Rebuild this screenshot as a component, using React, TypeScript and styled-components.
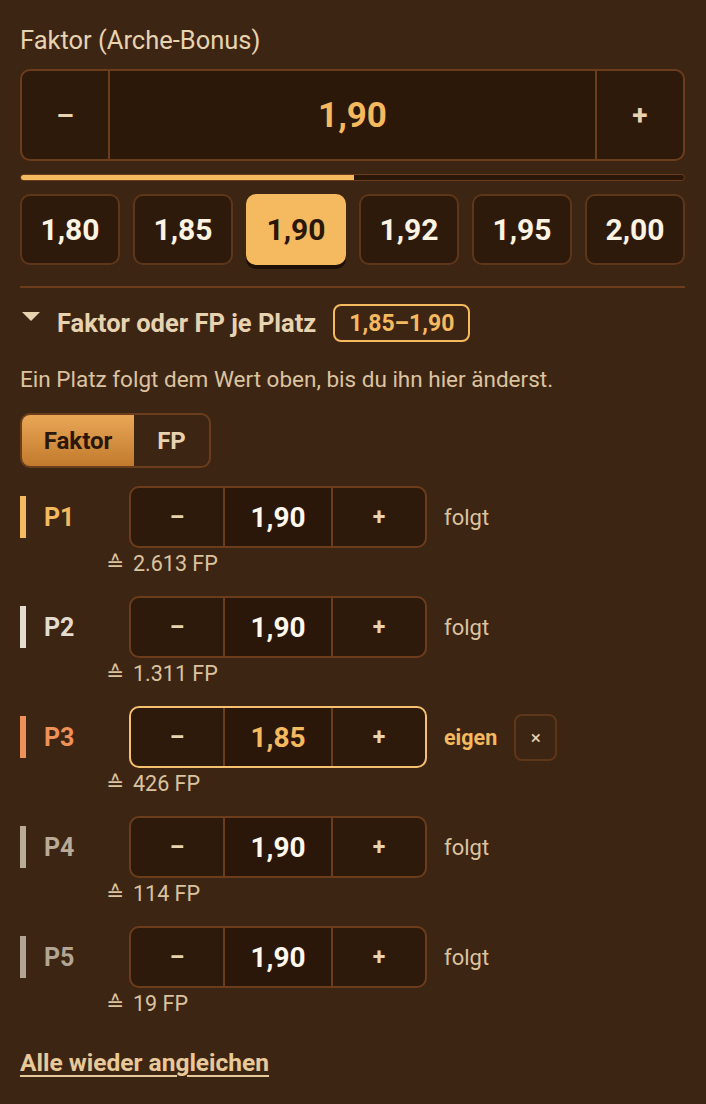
import React from 'react';
import styled, { createGlobalStyle, css } from 'styled-components';

const GlobalStyle = createGlobalStyle`
  body {
    margin: 0;
    background: #3d2513;
    font-family: Roboto, 'Noto Sans', 'DejaVu Sans', sans-serif;
    color: #e8d3b0;
  }
  * {
    box-sizing: border-box;
  }
`;

const Panel = styled.div`
  width: 706px;
  padding: 26px 21px 30px 20px;
`;

const Label = styled.div`
  font-size: 25.5px;
  line-height: 28px;
  color: #e8d3b0;
  margin-bottom: 15px;
`;

const BigStepper = styled.div`
  display: grid;
  grid-template-columns: 88px 1fr 88px;
  height: 92px;
  border: 2px solid #6b3d1c;
  border-radius: 10px;
  background: #2e1a0b;
  overflow: hidden;
`;

const StepButton = styled.button<{ $divider?: 'left' | 'right' }>`
  display: flex;
  align-items: center;
  justify-content: center;
  background: transparent;
  border: none;
  padding: 0;
  font-family: inherit;
  font-weight: 700;
  font-size: 28px;
  color: #e8d3b0;
  ${(p) =>
    p.$divider === 'left' &&
    css`
      border-left: 2px solid #6b3d1c;
    `}
  ${(p) =>
    p.$divider === 'right' &&
    css`
      border-right: 2px solid #6b3d1c;
    `}
`;

const BigValue = styled.div`
  display: flex;
  align-items: center;
  justify-content: center;
  font-size: 35px;
  font-weight: 700;
  color: #f5b95f;
  background: #2b1809;
`;

const Track = styled.div`
  margin-top: 13px;
  height: 7px;
  border: 1px solid #6b3d1c;
  border-radius: 4px;
  background: #2a170a;
  overflow: hidden;
`;

const TrackFill = styled.div`
  height: 100%;
  background: #f5b95f;
`;

const Presets = styled.div`
  margin-top: 13px;
  display: grid;
  grid-template-columns: repeat(6, 1fr);
  gap: 13px;
`;

const Preset = styled.button<{ $active?: boolean }>`
  height: 71px;
  border-radius: 10px;
  border: 2px solid #5e361a;
  background: #2e1a0b;
  font-family: inherit;
  font-size: 30px;
  font-weight: 700;
  color: #fdf3e2;
  ${(p) =>
    p.$active &&
    css`
      background: #f5b95f;
      border-color: #f5b95f;
      color: #2a170a;
      box-shadow: 0 4px 0 #1e1007;
    `}
`;

const Divider = styled.hr`
  margin: 21px 0 0;
  border: none;
  border-top: 2px solid #6b3d1c;
`;

const SummaryRow = styled.div`
  margin-top: 16px;
  display: flex;
  align-items: center;
  height: 38px;
`;

const Caret = styled.span`
  width: 0;
  height: 0;
  border-left: 9px solid transparent;
  border-right: 9px solid transparent;
  border-top: 9px solid #e8d3b0;
  margin: 0 17px 0 2px;
  transform: translateY(-7px);
`;

const SummaryTitle = styled.span`
  font-size: 25.5px;
  font-weight: 700;
  color: #e8d3b0;
`;

const RangeBadge = styled.span`
  margin-left: 17px;
  height: 38px;
  padding: 0 14px;
  display: flex;
  align-items: center;
  border: 2px solid #f5b95f;
  border-radius: 8px;
  font-size: 23px;
  font-weight: 700;
  color: #f5b95f;
`;

const Hint = styled.p`
  margin: 23px 0 0;
  font-size: 22.5px;
  line-height: 28px;
  color: #dcc3a0;
`;

const Toggle = styled.div`
  margin-top: 20px;
  display: inline-flex;
  height: 55px;
  border: 2px solid #6b3d1c;
  border-radius: 10px;
  overflow: hidden;
`;

const ToggleOption = styled.button<{ $active?: boolean; $width: number }>`
  width: ${(p) => p.$width}px;
  border: none;
  background: transparent;
  font-family: inherit;
  font-size: 24px;
  font-weight: 700;
  color: #e8d3b0;
  ${(p) =>
    p.$active &&
    css`
      background: linear-gradient(180deg, #e9a756 0%, #c27a2d 100%);
      color: #2a170a;
    `}
`;

const Places = styled.div`
  margin-top: 18px;
  display: flex;
  flex-direction: column;
  gap: 21px;
`;

const Place = styled.div`
  display: grid;
  grid-template-columns: 109px 298px auto auto;
  grid-template-rows: 62px auto;
  align-items: center;
  justify-content: start;
`;

const PlaceName = styled.div<{ $color: string }>`
  display: flex;
  align-items: center;
  height: 42px;
  border-left: 6px solid ${(p) => p.$color};
  padding-left: 18px;
  font-size: 25px;
  font-weight: 700;
  color: ${(p) => p.$color};
`;

const SmallStepper = styled.div<{ $custom?: boolean }>`
  display: grid;
  grid-template-columns: 94px 1fr 94px;
  height: 62px;
  border: 2px solid ${(p) => (p.$custom ? '#f5c070' : '#6b3d1c')};
  border-radius: 10px;
  background: #2e1a0b;
  overflow: hidden;
`;

const SmallValue = styled.div<{ $custom?: boolean }>`
  display: flex;
  align-items: center;
  justify-content: center;
  font-size: 28px;
  font-weight: 700;
  color: ${(p) => (p.$custom ? '#f5b95f' : '#fff8ec')};
  background: #2a1709;
`;

const SmallStep = styled(StepButton)`
  font-size: 23px;
`;

const Status = styled.span<{ $custom?: boolean }>`
  margin-left: 17px;
  font-size: ${(p) => (p.$custom ? 21.5 : 22)}px;
  color: ${(p) => (p.$custom ? '#f5b95f' : '#dcc3a0')};
  font-weight: ${(p) => (p.$custom ? 700 : 400)};
`;

const ResetButton = styled.button`
  margin-left: 17px;
  width: 43px;
  height: 47px;
  border: 2px solid #5e361a;
  border-radius: 8px;
  background: transparent;
  font-family: inherit;
  font-size: 19px;
  color: #e8d3b0;
`;

const Equivalent = styled.div`
  grid-column: 1 / -1;
  margin-top: 5px;
  padding-left: 86px;
  font-size: 21.5px;
  line-height: 22px;
  color: #dcc3a0;
`;

const EquivalentMark = styled.span`
  margin-right: 9px;
`;

const ResetAll = styled.button`
  margin-top: 33px;
  padding: 0;
  border: none;
  background: transparent;
  font-family: inherit;
  font-size: 24.5px;
  font-weight: 700;
  color: #e8c99a;
  text-decoration: underline;
  text-underline-offset: 4px;
`;

interface PlaceInfo {
  name: string;
  color: string;
  value: string;
  fp: string;
  custom?: boolean;
}

const PRESETS = ['1,80', '1,85', '1,90', '1,92', '1,95', '2,00'];

const PLACES: PlaceInfo[] = [
  { name: 'P1', color: '#f5b95f', value: '1,90', fp: '2.613 FP' },
  { name: 'P2', color: '#e4dccf', value: '1,90', fp: '1.311 FP' },
  { name: 'P3', color: '#f0915a', value: '1,85', fp: '426 FP', custom: true },
  { name: 'P4', color: '#b9ab98', value: '1,90', fp: '114 FP' },
  { name: 'P5', color: '#b3a593', value: '1,90', fp: '19 FP' },
];

const App: React.FC = () => {
  const progress = 50.2;

  return (
    <Panel>
      <GlobalStyle />
      <Label>Faktor (Arche-Bonus)</Label>
      <BigStepper>
        <StepButton $divider="right">–</StepButton>
        <BigValue>1,90</BigValue>
        <StepButton $divider="left">+</StepButton>
      </BigStepper>
      <Track>
        <TrackFill style={{ width: `${progress}%` }} />
      </Track>
      <Presets>
        {PRESETS.map((p) => (
          <Preset key={p} $active={p === '1,90'}>
            {p}
          </Preset>
        ))}
      </Presets>
      <Divider />
      <SummaryRow>
        <Caret />
        <SummaryTitle>Faktor oder FP je Platz</SummaryTitle>
        <RangeBadge>1,85–1,90</RangeBadge>
      </SummaryRow>
      <Hint>Ein Platz folgt dem Wert oben, bis du ihn hier änderst.</Hint>
      <Toggle>
        <ToggleOption $active $width={112}>
          Faktor
        </ToggleOption>
        <ToggleOption $width={75}>FP</ToggleOption>
      </Toggle>
      <Places>
        {PLACES.map((place) => (
          <Place key={place.name}>
            <PlaceName $color={place.color}>{place.name}</PlaceName>
            <SmallStepper $custom={place.custom}>
              <SmallStep $divider="right">–</SmallStep>
              <SmallValue $custom={place.custom}>{place.value}</SmallValue>
              <SmallStep $divider="left">+</SmallStep>
            </SmallStepper>
            <Status $custom={place.custom}>{place.custom ? 'eigen' : 'folgt'}</Status>
            {place.custom ? <ResetButton>×</ResetButton> : <span />}
            <Equivalent>
              <EquivalentMark>≙</EquivalentMark>
              {place.fp}
            </Equivalent>
          </Place>
        ))}
      </Places>
      <ResetAll>Alle wieder angleichen</ResetAll>
    </Panel>
  );
};

export default App;
